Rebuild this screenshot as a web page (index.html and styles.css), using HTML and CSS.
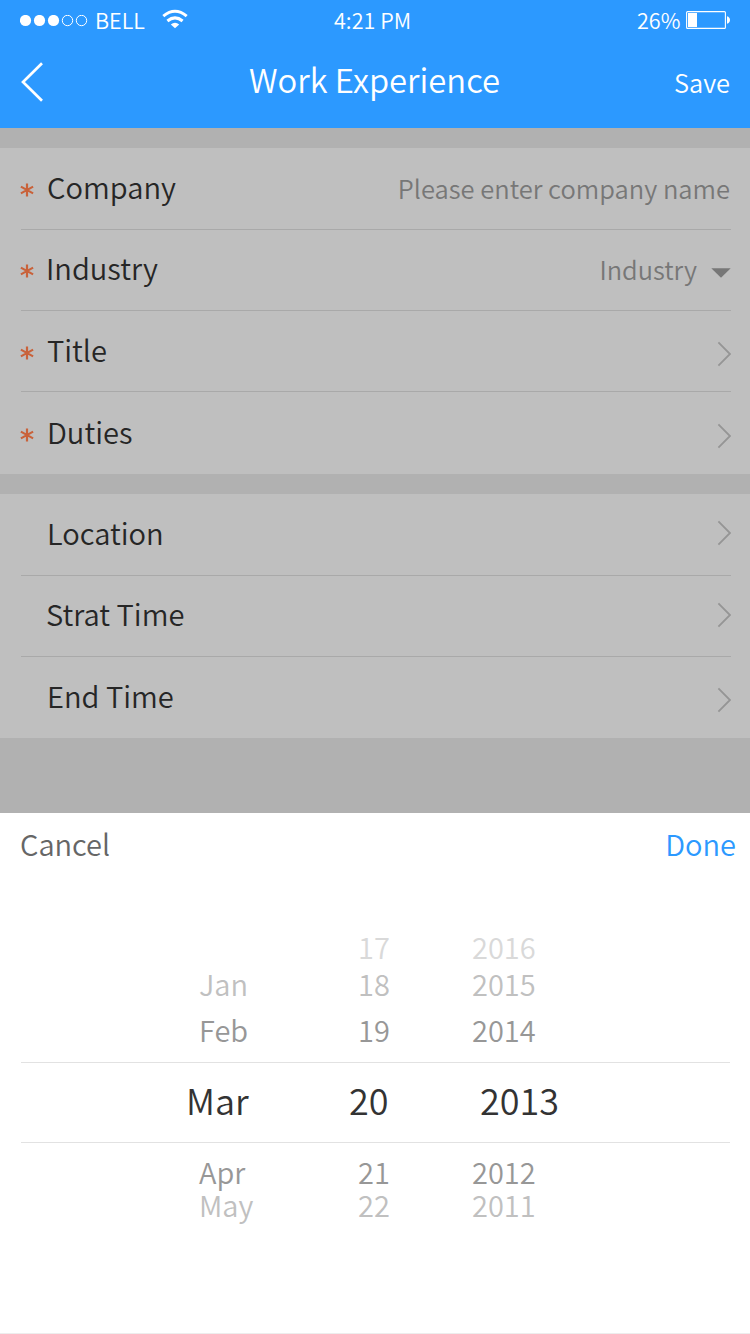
FILE: index.html
```
<!DOCTYPE html>
<html lang="en">
<head>
<meta charset="utf-8">
<title>Work Experience</title>
<link rel="stylesheet" href="styles.css">
</head>
<body>
<svg class="defs" width="0" height="0">
  <symbol id="star" viewBox="0 0 14 14"><path d="M7 .4v13.2M.9 3.6l12.2 6.8M13.1 3.6L.9 10.4" fill="none" stroke="#c9623a" stroke-width="2.2"/></symbol>
  <symbol id="chevron" viewBox="0 0 14 26"><path d="M1.4 1.3L13 13L1.4 24.7" fill="none" stroke="#959595" stroke-width="1.8"/></symbol>
</svg>
<div class="screen">
  <header class="header">
    <div class="status">
      <svg class="signal" width="68" height="12" viewBox="0 0 68 12"><g fill="#fff"><circle cx="5.5" cy="5.5" r="5.6"/><circle cx="19.5" cy="5.5" r="5.6"/><circle cx="33.5" cy="5.5" r="5.6"/></g><g fill="none" stroke="#fff"><circle cx="47.5" cy="5.5" r="5.2"/><circle cx="61.5" cy="5.5" r="5.2"/></g></svg>
      <span class="carrier">BELL</span>
      <svg class="wifi" width="26" height="20" viewBox="0 0 26 20"><g fill="none" stroke="#fff" stroke-width="3"><path d="M1.3 7.2Q13-2.6 24.7 7.2"/><path d="M5.4 12Q13 5.8 20.6 12"/></g><path d="M8.8 15.5Q13 12 17.2 15.5L13 19.2z" fill="#fff"/></svg>
      <span class="clock">4:21 PM</span>
      <span class="percent">26%</span>
      <svg class="battery" width="45" height="18" viewBox="0 0 45 18"><rect x=".6" y=".6" width="38.8" height="16.8" rx="1" fill="none" stroke="#fff" stroke-width="1.1"/><path d="M2 2h9v14H2zM41 5.2q3 1 3 3.8t-3 3.8z" fill="#fff"/></svg>
    </div>
    <nav class="nav">
      <svg class="back" width="24" height="40" viewBox="0 0 24 40"><path d="M22 1.2L3 20l19 18.8" fill="none" stroke="#fff" stroke-width="2.7"/></svg>
      <h1 class="title">Work Experience</h1>
      <span class="save">Save</span>
    </nav>
  </header>

  <main class="form">
    <section class="group">
      <div class="row tall"><svg class="star"><use href="#star"/></svg><span class="label">Company</span><span class="hint name">Please enter company name</span></div>
      <div class="row raised"><svg class="star"><use href="#star"/></svg><span class="label outdent">Industry</span><span class="hint">Industry</span><svg class="caret" width="20" height="10" viewBox="0 0 20 10"><path d="M.3.2h19.4L10 9.8z" fill="#777"/></svg></div>
      <div class="row"><svg class="star"><use href="#star"/></svg><span class="label">Title</span><svg class="chevron"><use href="#chevron"/></svg></div>
      <div class="row tall lowered"><svg class="star"><use href="#star"/></svg><span class="label">Duties</span><svg class="chevron"><use href="#chevron"/></svg></div>
    </section>
    <section class="group optional">
      <div class="row tall"><span class="label">Location</span><svg class="chevron high"><use href="#chevron"/></svg></div>
      <div class="row raised"><span class="label outdent">Strat Time</span><svg class="chevron mid"><use href="#chevron"/></svg></div>
      <div class="row"><span class="label">End Time</span><svg class="chevron"><use href="#chevron"/></svg></div>
    </section>
  </main>

  <section class="sheet">
    <div class="actions"><span class="cancel">Cancel</span><span class="done">Done</span></div>
    <div class="wheel">
      <div class="option faint"><span></span><span>17</span><span>2016</span></div>
      <div class="option light jan"><span>Jan</span><span>18</span><span>2015</span></div>
      <div class="option near feb"><span>Feb</span><span>19</span><span>2014</span></div>
      <div class="selected"><span>Mar</span><span>20</span><span>2013</span></div>
      <div class="option near apr"><span>Apr</span><span>21</span><span>2012</span></div>
      <div class="option light may"><span>May</span><span>22</span><span>2011</span></div>
    </div>
  </section>
</div>
</body>
</html>
```
FILE: styles.css
```
* { box-sizing: border-box; }
body {
  margin: 0;
  font-family: "Noto Sans CJK SC DemiLight", "Noto Sans CJK SC", sans-serif;
  font-weight: 350;
}
svg { display: block; flex: none; }
span, h1 { white-space: nowrap; }
.defs { position: absolute; }
.screen {
  width: 750px;
  height: 1334px;
  display: flex;
  flex-direction: column;
  background: #b1b1b1;
  overflow: hidden;
}

/* Header */
.header { height: 128px; background: #2c99ff; color: #fff; }
.status {
  height: 40px;
  display: grid;
  grid-template-columns: 75px 66px 173px 303px 49px 45px;
  padding-left: 20px;
  font-size: 21.6px;
  line-height: 38px;
  align-items: start;
}
.signal { margin-top: 15px; }
.carrier { margin-top: 1px; }
.wifi { margin-top: 9px; margin-left: 1px; }
.clock { margin-top: 1px; }
.percent { margin-top: 1px; }
.battery { margin-top: 11px; }
.nav {
  height: 88px;
  display: grid;
  grid-template-columns: 229px 425px auto;
  padding-left: 20px;
  align-items: start;
}
.back { margin-top: 22px; }
.title { margin: 16px 0 0; font-size: 32.8px; font-weight: inherit; line-height: 46px; }
.save { margin-top: 19px; font-size: 25.4px; line-height: 46px; }

/* Form */
.form { height: 685px; padding-top: 20px; display: flex; flex-direction: column; gap: 20px; }
.group { background: #bfbfbf; padding: 0 19px 0 21px; }
.row {
  height: 81px;
  padding-top: 15px;
  display: flex;
  align-items: flex-start;
  border-bottom: 1px solid #a9a9a9;
}
.row:last-child { border-bottom: 0; }
.row.tall { height: 82px; }
.row.raised { padding-top: 14px; }
.row.lowered { padding-top: 16px; }
.star { width: 14px; height: 14px; margin: 20px 12px 0 -1px; }
.label { margin-left: 1px; font-size: 29.1px; line-height: 46px; color: #262626; }
.label.outdent { margin-left: 0; }
.optional .label { margin-left: 26px; }
.optional .label.outdent { margin-left: 25px; }
.hint { margin-left: auto; font-size: 25.4px; line-height: 50px; color: #777; }
.hint.name { margin-right: 1px; font-size: 25.5px; }
.caret { margin: 24px 0 0 14px; }
.chevron { width: 14px; height: 26px; margin: 15px 0 0 auto; }
.chevron.high { margin-top: 11px; }
.chevron.mid { margin-top: 12px; }

/* Date picker */
.sheet { height: 521px; background: #fff; border-bottom: 1px solid #ededed; }
.actions {
  height: 117px;
  padding: 6px 14px 0 20px;
  display: flex;
  justify-content: space-between;
  font-size: 29px;
  line-height: 48px;
}
.cancel { color: #666; }
.done { color: #2c99ff; }
.option {
  display: grid;
  grid-template-columns: 159px 114px auto;
  padding-left: 199px;
  font-size: 29px;
  line-height: 32px;
  height: 32px;
}
.faint { color: #d9d9d9; }
.light { color: #c0c0c0; }
.near { color: #979797; }
.jan { margin-top: 5px; }
.feb { margin-top: 14px; }
.apr { margin-top: 12px; }
.may { margin-top: 1px; }
.selected {
  height: 81px;
  margin: 17px 20px 0 21px;
  padding-left: 165px;
  display: grid;
  grid-template-columns: 163px 131px auto;
  border-top: 1px solid #e2e2e2;
  border-bottom: 1px solid #e2e2e2;
  font-size: 36px;
  line-height: 73px;
  color: #333;
}
```
